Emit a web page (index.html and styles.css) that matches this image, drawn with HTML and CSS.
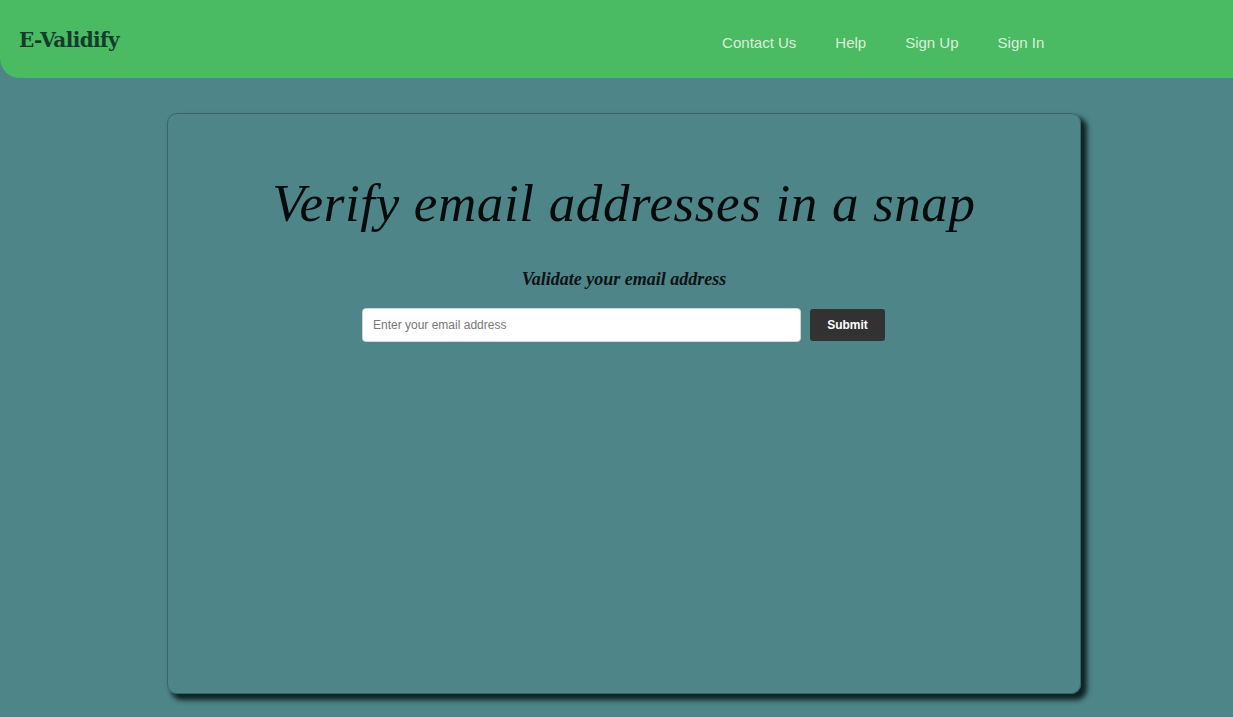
FILE: index.html
```html
<!DOCTYPE html>
<html lang="en">
<head>
<meta charset="utf-8">
<title>E-Validify</title>
<link rel="stylesheet" href="styles.css">
</head>
<body>
<header class="topbar">
  <div class="logo">E-Validify</div>
  <nav class="nav">
    <a href="#">Contact Us</a>
    <a href="#">Help</a>
    <a href="#">Sign Up</a>
    <a href="#">Sign In</a>
  </nav>
</header>
<main class="wrap">
  <section class="card">
    <h1 class="title">Verify email addresses in a snap</h1>
    <h3 class="subtitle">Validate your email address</h3>
    <form class="form">
      <input class="email" type="text" placeholder="Enter your email address">
      <button class="submit" type="button">Submit</button>
    </form>
  </section>
</main>
</body>
</html>
```

FILE: styles.css
```css
html, body {
  margin: 0;
  padding: 0;
}
body {
  background: #4e8589;
  font-family: "Liberation Sans", Arial, sans-serif;
  height: 717px;
  overflow: hidden;
}
.topbar {
  height: 78px;
  background: #4aba63;
  border-bottom-left-radius: 20px;
  display: flex;
  align-items: center;
  box-sizing: border-box;
  padding-left: 19px;
}
.logo {
  font-family: "DejaVu Serif", "Liberation Serif", serif;
  font-weight: bold;
  font-size: 20px;
  color: #123d2a;
  letter-spacing: -0.6px;
  margin-top: 2px;
}
.nav {
  display: flex;
  gap: 39px;
  margin-left: 603px;
  margin-top: 6px;
}
.nav a {
  color: #dcefdc;
  text-decoration: none;
  font-size: 15px;
}
.wrap {
  display: flex;
  padding-top: 35px;
  padding-left: 167px;
}
.card {
  width: 914px;
  height: 581px;
  box-sizing: border-box;
  border: 1px solid #3a6668;
  border-radius: 10px;
  box-shadow: 5px 5px 5px 1px #0f2325;
  display: flex;
  flex-direction: column;
  align-items: center;
}
.title {
  margin: 57px 0 0 0;
  font-family: "Liberation Serif", serif;
  font-style: italic;
  font-weight: normal;
  font-size: 53px;
  line-height: 64px;
  color: #050a0a;
  letter-spacing: 0.65px;
}
.subtitle {
  margin: 34px 0 0 0;
  font-family: "Liberation Serif", serif;
  font-style: italic;
  font-weight: bold;
  font-size: 18px;
  line-height: 20px;
  color: #0a1414;
}
.form {
  display: flex;
  gap: 9px;
  margin-top: 19px;
  margin-left: -1px;
}
.email {
  width: 439px;
  height: 34px;
  box-sizing: border-box;
  border: 1px solid #cfd8d8;
  border-radius: 4px;
  padding: 0 10px;
  font-family: "Liberation Sans", Arial, sans-serif;
  font-size: 12px;
  background: #fff;
}
.email::placeholder {
  color: #777;
}
.submit {
  width: 75px;
  height: 32px;
  margin-top: 1px;
  background: #323232;
  color: #fff;
  border: none;
  border-radius: 3px;
  font-family: "Liberation Sans", Arial, sans-serif;
  font-size: 12px;
  font-weight: bold;
}
```
